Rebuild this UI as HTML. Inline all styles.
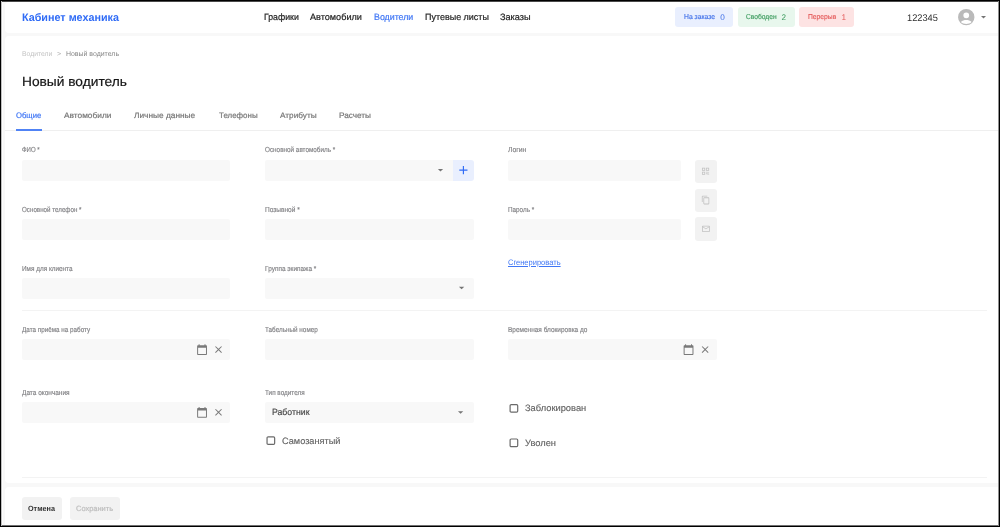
<!DOCTYPE html>
<html lang="ru">
<head>
<meta charset="utf-8">
<title>Новый водитель — Кабинет механика</title>
<style>
html,body{margin:0;padding:0}
body{width:1000px;height:527px;overflow:hidden;position:relative;background:#000;font-family:"Liberation Sans", sans-serif;text-rendering:geometricPrecision}
#page{position:absolute;left:0;top:0;width:1000px;height:527px;background:#f8f8f8;filter:blur(0.4px)}
#frame{position:absolute;left:0;top:0;width:1000px;height:527px}
.b{position:absolute;display:block;margin:0;padding:0;border:0}
.t{position:absolute;display:block;margin:0;padding:0;white-space:nowrap;line-height:14px;height:14px;font-weight:400;text-decoration:none;transform-origin:0 50%}
svg{position:absolute;overflow:visible}
</style>
</head>
<body>
<div id="page">
<header>
<div class="b card" style="left:5px;top:2px;width:995px;height:31px;background:#fff;border-radius:4px 0 0 4px;"></div>
<a class="t logo" style="left:22px;top:11px;font-size:11px;color:#2f6bf6;transform:scaleX(0.9801);font-weight:700;">Кабинет механика</a>
<nav class="nav">
<a class="t" style="left:264.1px;top:10px;font-size:9.2px;color:#222;transform:scaleX(0.9526);-webkit-text-stroke:0.2px;">Графики</a>
<a class="t" style="left:310.3px;top:10px;font-size:9.2px;color:#222;transform:scaleX(0.9915);-webkit-text-stroke:0.2px;">Автомобили</a>
<a class="t active" style="left:373.6px;top:10px;font-size:9.2px;color:#3f76f5;transform:scaleX(0.9600);-webkit-text-stroke:0.2px;">Водители</a>
<a class="t" style="left:424.6px;top:10px;font-size:9.2px;color:#222;transform:scaleX(0.9760);-webkit-text-stroke:0.2px;">Путевые листы</a>
<a class="t" style="left:499.9px;top:10px;font-size:9.2px;color:#222;transform:scaleX(0.9966);-webkit-text-stroke:0.2px;">Заказы</a>
</nav>
<div class="status">
<div class="b badge" style="left:675.2px;top:7.2px;width:57.6px;height:19.6px;background:#e9effe;border-radius:3px;"></div>
<div class="b badge" style="left:737.6px;top:7.2px;width:57px;height:19.6px;background:#e8f7ed;border-radius:3px;"></div>
<div class="b badge" style="left:799.2px;top:7.2px;width:55px;height:19.6px;background:#fde3e3;border-radius:3px;"></div>
<span class="t" style="left:684.4px;top:10px;font-size:7.2px;color:#3f6fe8;transform:scaleX(0.9416);-webkit-text-stroke:0.15px;">На заказе</span>
<span class="t" style="left:720.2px;top:11px;font-size:8.2px;color:#3f6fe8;">0</span>
<span class="t" style="left:746.4px;top:10px;font-size:7.2px;color:#3a9a5c;transform:scaleX(0.9260);-webkit-text-stroke:0.15px;">Свободен</span>
<span class="t" style="left:781.6px;top:11px;font-size:8.2px;color:#3a9a5c;">2</span>
<span class="t" style="left:808.2px;top:10px;font-size:7.2px;color:#e45a5a;transform:scaleX(0.9356);-webkit-text-stroke:0.15px;">Перерыв</span>
<span class="t" style="left:841.6px;top:11px;font-size:8.2px;color:#e45a5a;">1</span>
</div>
<div class="user">
<span class="t" style="left:907px;top:12px;font-size:9.6px;color:#2e2e2e;transform:scaleX(0.9620);">122345</span>
<svg class="i-account" style="left:956px;top:7px" width="21" height="21" viewBox="-0.487 -0.365 25.584 25.584"><path fill="#bababa" fill-rule="evenodd" d="M12 2a10 10 0 1 0 0 20a10 10 0 1 0 0-20zM12 6.3a3.5 3.5 0 1 1 0 7a3.5 3.5 0 1 1 0-7zM5.5 18C7.2 16.2 9.6 15.5 12 15.5s4.8.7 6.5 2.5C16.8 19.7 14.5 20.3 12 20.3s-4.8-.6-6.5-2.3z"/></svg>
<svg class="i-caret" style="left:977px;top:11px" width="13" height="13" viewBox="-1.000 -0.000 26.000 26.000"><path fill="#757575" fill-rule="evenodd" d="M7 10l5 5 5-5z"/></svg>
</div>
</header>
<main>
<div class="b card" style="left:5px;top:36px;width:995px;height:447px;background:#fff;border-radius:4px 0 0 4px;"></div>
<h1 class="t" style="left:21.9px;top:75px;font-size:13.2px;color:#151515;transform:scaleX(1.0417);-webkit-text-stroke:0.2px;">Новый водитель</h1>
<nav class="breadcrumbs">
<a class="t" style="left:21.8px;top:48px;font-size:7px;color:#c4c4c4;transform:scaleX(0.9747);">Водители</a>
<span class="t" style="left:57px;top:48px;font-size:7px;color:#aaa;">&gt;</span>
<span class="t" style="left:66px;top:48px;font-size:7px;color:#858585;transform:scaleX(0.9915);">Новый водитель</span>
</nav>
<nav class="tabs">
<div class="b" style="left:5px;top:130px;width:995px;height:1px;background:#efefef;"></div>
<div class="b" style="left:16.4px;top:129px;width:25.2px;height:2px;background:#5083f5;"></div>
<a class="t active" style="left:16.4px;top:109px;font-size:8px;color:#3f76f5;transform:scaleX(0.9577);-webkit-text-stroke:0.2px;">Общие</a>
<a class="t" style="left:64px;top:109px;font-size:8px;color:#777;transform:scaleX(1.0400);-webkit-text-stroke:0.2px;">Автомобили</a>
<a class="t" style="left:134px;top:109px;font-size:8px;color:#777;transform:scaleX(1.0392);-webkit-text-stroke:0.2px;">Личные данные</a>
<a class="t" style="left:218.6px;top:109px;font-size:8px;color:#777;transform:scaleX(0.9913);-webkit-text-stroke:0.2px;">Телефоны</a>
<a class="t" style="left:279.8px;top:109px;font-size:8px;color:#777;transform:scaleX(1.0292);-webkit-text-stroke:0.2px;">Атрибуты</a>
<a class="t" style="left:339.4px;top:109px;font-size:8px;color:#777;transform:scaleX(1.0255);-webkit-text-stroke:0.2px;">Расчеты</a>
</nav>
<form class="form">
<label class="t" style="left:21.8px;top:143px;font-size:7.3px;color:#808084;transform:scaleX(0.8293);-webkit-text-stroke:0.15px;">ФИО *</label>
<div class="b field" style="left:21.7px;top:159.5px;width:208.6px;height:21px;background:#f8f8f8;border-radius:2px;"></div>
<label class="t" style="left:21.8px;top:203px;font-size:7.3px;color:#808084;transform:scaleX(0.8519);-webkit-text-stroke:0.15px;">Основной телефон *</label>
<div class="b field" style="left:21.7px;top:218.7px;width:208.6px;height:21.3px;background:#f8f8f8;border-radius:2px;"></div>
<label class="t" style="left:21.8px;top:262px;font-size:7.3px;color:#808084;transform:scaleX(0.8745);-webkit-text-stroke:0.15px;">Имя для клиента</label>
<div class="b field" style="left:21.7px;top:278px;width:208.6px;height:21.4px;background:#f8f8f8;border-radius:2px;"></div>
<label class="t" style="left:265.2px;top:143px;font-size:7.3px;color:#808084;transform:scaleX(0.8696);-webkit-text-stroke:0.15px;">Основной автомобиль *</label>
<div class="b field" style="left:265.2px;top:159.5px;width:187.4px;height:21px;background:#f8f8f8;border-radius:2px 0 0 2px;"></div>
<svg class="i-caret" style="left:434px;top:163px" width="14" height="14" viewBox="-0.283 -1.295 26.457 26.457"><path fill="#757575" fill-rule="evenodd" d="M7 10l5 5 5-5z"/></svg>
<div class="b add" style="left:452.6px;top:159.5px;width:21.3px;height:21px;background:#e9effe;border-radius:0 3px 3px 0;"></div>
<svg class="i-plus" style="left:456px;top:163px" width="15" height="15" viewBox="-0.686 -0.257 25.714 25.714"><path fill="#2f6bf6" fill-rule="evenodd" d="M19 13h-6v6h-2v-6H5v-2h6V5h2v6h6v2z"/></svg>
<label class="t" style="left:265.2px;top:203px;font-size:7.3px;color:#808084;transform:scaleX(0.8988);-webkit-text-stroke:0.15px;">Позывной *</label>
<div class="b field" style="left:265.2px;top:218.7px;width:208.7px;height:21.3px;background:#f8f8f8;border-radius:2px;"></div>
<label class="t" style="left:265.2px;top:262px;font-size:7.3px;color:#808084;transform:scaleX(0.8850);-webkit-text-stroke:0.15px;">Группа экипажа *</label>
<div class="b field" style="left:265.2px;top:278px;width:208.7px;height:21.4px;background:#f8f8f8;border-radius:2px;"></div>
<svg class="i-caret" style="left:455px;top:281px" width="14" height="14" viewBox="-0.472 -0.728 26.457 26.457"><path fill="#757575" fill-rule="evenodd" d="M7 10l5 5 5-5z"/></svg>
<label class="t" style="left:508.2px;top:143px;font-size:7.3px;color:#808084;transform:scaleX(0.9376);-webkit-text-stroke:0.15px;">Логин</label>
<div class="b field" style="left:508.2px;top:159.5px;width:173.3px;height:21px;background:#f8f8f8;border-radius:2px;"></div>
<label class="t" style="left:508.2px;top:203px;font-size:7.3px;color:#808084;transform:scaleX(0.8679);-webkit-text-stroke:0.15px;">Пароль *</label>
<div class="b field" style="left:508.2px;top:218.7px;width:173.3px;height:21.3px;background:#f8f8f8;border-radius:2px;"></div>
<div class="b ibtn" style="left:694.9px;top:159.5px;width:21.9px;height:23.3px;background:#f2f2f2;border-radius:3px;"></div>
<svg class="i-qr" style="left:700px;top:166px" width="11" height="11" viewBox="-2.021 -1.263 27.789 27.789"><path fill="#c2c2c2" fill-rule="evenodd" d="M3 11h8V3H3v8zm2-6h4v4H5V5zM3 21h8v-8H3v8zm2-6h4v4H5v-4zM13 3v8h8V3h-8zm6 6h-4V5h4v4zM19 19h2v2h-2zM13 13h2v2h-2zM15 15h2v2h-2zM13 17h2v2h-2zM15 19h2v2h-2zM17 17h2v2h-2zM17 13h2v2h-2zM19 15h2v2h-2z"/></svg>
<div class="b ibtn" style="left:694.9px;top:188.5px;width:21.9px;height:23.2px;background:#f2f2f2;border-radius:3px;"></div>
<svg class="i-copy" style="left:701px;top:195px" width="11" height="11" viewBox="-0.117 -1.021 28.085 28.085"><path fill="#c2c2c2" fill-rule="evenodd" d="M16 1H4c-1.1 0-2 .9-2 2v14h2V3h12V1zm3 4H8c-1.1 0-2 .9-2 2v14c0 1.1.9 2 2 2h11c1.1 0 2-.9 2-2V7c0-1.1-.9-2-2-2zm0 16H8V7h11v14z"/></svg>
<div class="b ibtn" style="left:694.9px;top:217.4px;width:21.9px;height:23.3px;background:#f2f2f2;border-radius:3px;"></div>
<svg class="i-mail" style="left:701px;top:224px" width="11" height="11" viewBox="-0.638 -0.383 28.085 28.085"><path fill="#c2c2c2" fill-rule="evenodd" d="M20 4H4c-1.1 0-1.99.9-1.99 2L2 18c0 1.1.9 2 2 2h16c1.1 0 2-.9 2-2V6c0-1.1-.9-2-2-2zm0 14H4V8l8 5 8-5v10zm-8-7L4 6h16l-8 5z"/></svg>
<a class="t" style="left:508.2px;top:256px;font-size:8px;color:#3f76f5;transform:scaleX(0.9406);text-decoration:underline;">Сгенерировать</a>
<div class="b" style="left:21.7px;top:310px;width:965.3px;height:1px;background:#f3f3f3;"></div>
<label class="t" style="left:21.8px;top:323px;font-size:7.3px;color:#808084;transform:scaleX(0.8653);-webkit-text-stroke:0.15px;">Дата приёма на работу</label>
<div class="b field" style="left:21.7px;top:339.3px;width:208.6px;height:20.7px;background:#f8f8f8;border-radius:2px;"></div>
<svg class="i-cal" style="left:196px;top:343px" width="13" height="13" viewBox="-0.305 -1.525 26.441 26.441"><path fill="#797979" fill-rule="evenodd" d="M20 3h-1V1h-2v2H7V1H5v2H4c-1.1 0-2 .9-2 2v16c0 1.1.9 2 2 2h16c1.1 0 2-.9 2-2V5c0-1.1-.9-2-2-2zm0 18H4V8h16v13z"/></svg>
<svg class="i-close" style="left:212px;top:343px" width="13" height="13" viewBox="-1.333 -1.436 26.667 26.667"><path fill="#797979" fill-rule="evenodd" d="M19 6.41L17.59 5 12 10.59 6.41 5 5 6.41 10.59 12 5 17.59 6.41 19 12 13.41 17.59 19 19 17.59 13.41 12z"/></svg>
<label class="t" style="left:265.2px;top:323px;font-size:7.3px;color:#808084;transform:scaleX(0.8689);-webkit-text-stroke:0.15px;">Табельный номер</label>
<div class="b field" style="left:265.2px;top:339.3px;width:208.7px;height:20.7px;background:#f8f8f8;border-radius:2px;"></div>
<label class="t" style="left:508.2px;top:323px;font-size:7.3px;color:#808084;transform:scaleX(0.8879);-webkit-text-stroke:0.15px;">Временная блокировка до</label>
<div class="b field" style="left:508.2px;top:339.3px;width:208.8px;height:20.7px;background:#f8f8f8;border-radius:2px;"></div>
<svg class="i-cal" style="left:682px;top:343px" width="13" height="13" viewBox="-1.322 -1.525 26.441 26.441"><path fill="#797979" fill-rule="evenodd" d="M20 3h-1V1h-2v2H7V1H5v2H4c-1.1 0-2 .9-2 2v16c0 1.1.9 2 2 2h16c1.1 0 2-.9 2-2V5c0-1.1-.9-2-2-2zm0 18H4V8h16v13z"/></svg>
<svg class="i-close" style="left:699px;top:343px" width="13" height="13" viewBox="-0.615 -1.436 26.667 26.667"><path fill="#797979" fill-rule="evenodd" d="M19 6.41L17.59 5 12 10.59 6.41 5 5 6.41 10.59 12 5 17.59 6.41 19 12 13.41 17.59 19 19 17.59 13.41 12z"/></svg>
<label class="t" style="left:21.8px;top:386px;font-size:7.3px;color:#808084;transform:scaleX(0.8892);-webkit-text-stroke:0.15px;">Дата окончания</label>
<div class="b field" style="left:21.7px;top:402px;width:208.6px;height:21px;background:#f8f8f8;border-radius:2px;"></div>
<svg class="i-cal" style="left:196px;top:406px" width="13" height="13" viewBox="-0.305 -1.017 26.441 26.441"><path fill="#797979" fill-rule="evenodd" d="M20 3h-1V1h-2v2H7V1H5v2H4c-1.1 0-2 .9-2 2v16c0 1.1.9 2 2 2h16c1.1 0 2-.9 2-2V5c0-1.1-.9-2-2-2zm0 18H4V8h16v13z"/></svg>
<svg class="i-close" style="left:212px;top:406px" width="13" height="13" viewBox="-1.333 -0.923 26.667 26.667"><path fill="#797979" fill-rule="evenodd" d="M19 6.41L17.59 5 12 10.59 6.41 5 5 6.41 10.59 12 5 17.59 6.41 19 12 13.41 17.59 19 19 17.59 13.41 12z"/></svg>
<label class="t" style="left:265.2px;top:386px;font-size:7.3px;color:#808084;transform:scaleX(0.8700);-webkit-text-stroke:0.15px;">Тип водителя</label>
<div class="b field" style="left:265.2px;top:402px;width:208.7px;height:21px;background:#f8f8f8;border-radius:2px;"></div>
<span class="t" style="left:271.9px;top:405px;font-size:9px;color:#444;transform:scaleX(0.9681);-webkit-text-stroke:0.15px;">Работник</span>
<svg class="i-caret" style="left:454px;top:405px" width="14" height="14" viewBox="-0.472 -1.673 26.457 26.457"><path fill="#757575" fill-rule="evenodd" d="M7 10l5 5 5-5z"/></svg>
<svg class="check" style="left:266px;top:436px" width="11" height="11" viewBox="0 0 11 11"><rect x="1.05" y="0.85" width="7.6" height="7.6" rx="1.1" fill="#fff" stroke="#6a6a6a" stroke-width="1.2"/></svg>
<label class="t" style="left:281.8px;top:434px;font-size:9.2px;color:#626262;transform:scaleX(0.9983);-webkit-text-stroke:0.15px;">Самозанятый</label>
<svg class="check" style="left:509px;top:404px" width="11" height="11" viewBox="0 0 11 11"><rect x="1.1" y="0.6" width="7.6" height="7.6" rx="1.1" fill="#fff" stroke="#6a6a6a" stroke-width="1.2"/></svg>
<label class="t" style="left:525.1px;top:401px;font-size:9.2px;color:#626262;transform:scaleX(1.0129);-webkit-text-stroke:0.15px;">Заблокирован</label>
<svg class="check" style="left:509px;top:438px" width="11" height="11" viewBox="0 0 11 11"><rect x="1.1" y="1" width="7.6" height="7.6" rx="1.1" fill="#fff" stroke="#6a6a6a" stroke-width="1.2"/></svg>
<label class="t" style="left:525.1px;top:436px;font-size:9.2px;color:#626262;transform:scaleX(1.0143);-webkit-text-stroke:0.15px;">Уволен</label>
<div class="b" style="left:21.7px;top:477px;width:965.3px;height:1px;background:#f3f3f3;"></div>
</form>
</main>
<footer>
<div class="b card" style="left:5px;top:487px;width:995px;height:40px;background:#fff;border-radius:4px 0 0 0;"></div>
<div class="b btn" style="left:21.7px;top:497px;width:40.2px;height:23px;background:#f2f2f2;border-radius:3px;"></div>
<div class="b btn" style="left:69.7px;top:497px;width:50.3px;height:23px;background:#f2f2f2;border-radius:3px;"></div>
<span class="t" style="left:28.4px;top:502px;font-size:7.6px;color:#333;transform:scaleX(0.9512);font-weight:700;">Отмена</span>
<span class="t" style="left:76.3px;top:502px;font-size:7.6px;color:#bdbdbd;transform:scaleX(0.9828);-webkit-text-stroke:0.2px;">Сохранить</span>
</footer>
</div>
<div id="frame">
<div class="b" style="left:2px;top:2px;width:1px;height:523px;background:#fdfdfd"></div>
<div class="b" style="left:0px;top:0px;width:1000px;height:1px;background:#000"></div>
<div class="b" style="left:0px;top:1px;width:1000px;height:1px;background:#4a4a4a"></div>
<div class="b" style="left:0px;top:525px;width:1000px;height:1px;background:#707070"></div>
<div class="b" style="left:0px;top:526px;width:1000px;height:1px;background:#000"></div>
<div class="b" style="left:1px;top:1px;width:1px;height:525px;background:#c0c0c0"></div>
<div class="b" style="left:0px;top:0px;width:1px;height:527px;background:#000"></div>
<div class="b" style="left:998px;top:1px;width:1px;height:525px;background:#909090"></div>
<div class="b" style="left:999px;top:0px;width:1px;height:527px;background:#000"></div>
</div>
</body>
</html>
